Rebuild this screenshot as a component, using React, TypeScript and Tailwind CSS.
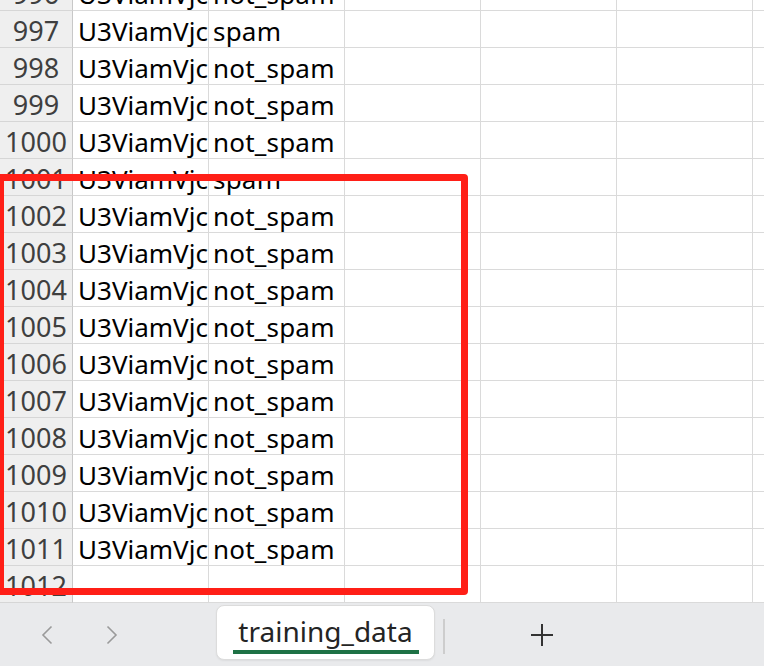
import React from "react";

const rows: { n: number; a: string; b: string }[] = [
  { n: 996, a: "U3ViamVjc", b: "not_spam" },
  { n: 997, a: "U3ViamVjc", b: "spam" },
  { n: 998, a: "U3ViamVjc", b: "not_spam" },
  { n: 999, a: "U3ViamVjc", b: "not_spam" },
  { n: 1000, a: "U3ViamVjc", b: "not_spam" },
  { n: 1001, a: "U3ViamVjc", b: "spam" },
  { n: 1002, a: "U3ViamVjc", b: "not_spam" },
  { n: 1003, a: "U3ViamVjc", b: "not_spam" },
  { n: 1004, a: "U3ViamVjc", b: "not_spam" },
  { n: 1005, a: "U3ViamVjc", b: "not_spam" },
  { n: 1006, a: "U3ViamVjc", b: "not_spam" },
  { n: 1007, a: "U3ViamVjc", b: "not_spam" },
  { n: 1008, a: "U3ViamVjc", b: "not_spam" },
  { n: 1009, a: "U3ViamVjc", b: "not_spam" },
  { n: 1010, a: "U3ViamVjc", b: "not_spam" },
  { n: 1011, a: "U3ViamVjc", b: "not_spam" },
  { n: 1012, a: "", b: "" },
];

export default function App() {
  return (
    <div
      className="relative w-[764px] h-[666px] overflow-hidden bg-white flex flex-col"
      style={{ fontFamily: '"Noto Sans", "Open Sans", sans-serif' }}
    >
      <div className="flex-1 overflow-hidden">
        <div className="mt-[-26px] flex flex-col">
          {rows.map((r) => (
            <div key={r.n} className="flex h-[37px] shrink-0">
              <div className="w-[73px] shrink-0 h-full box-border pt-[3px] border-b border-r border-b-[#d6d6d6] border-r-[#c8c8c8] bg-[#efefef] flex items-center justify-center text-[27px] leading-none text-[#3f3f3f] overflow-hidden">
                {r.n}
              </div>
              <div className="w-[136px] shrink-0 h-full box-border pt-[3px] border-b border-r border-[#dadada] flex items-center pl-[5px] text-[26px] leading-none text-black overflow-hidden whitespace-nowrap">
                {r.a}
              </div>
              <div className="w-[136px] shrink-0 h-full box-border pt-[3px] border-b border-r border-[#dadada] flex items-center pl-[4px] text-[26px] tracking-[0.2px] leading-none text-black overflow-hidden whitespace-nowrap">
                {r.b}
              </div>
              <div className="w-[136px] shrink-0 h-full box-border border-b border-r border-[#dadada]" />
              <div className="w-[136px] shrink-0 h-full box-border border-b border-r border-[#dadada]" />
              <div className="w-[136px] shrink-0 h-full box-border border-b border-r border-[#dadada]" />
              <div className="flex-1 h-full box-border border-b border-[#dadada]" />
            </div>
          ))}
        </div>
      </div>

      <div className="h-[63px] shrink-0 bg-[#e9eaec] flex items-start">
        <div className="w-[216px] h-full flex items-center">
          <svg width="12" height="20" viewBox="0 0 12 20" className="ml-[41px]">
            <path d="M10.5 1.5 L2 10 L10.5 18.5" fill="none" stroke="#9a9a9a" strokeWidth="1.6" />
          </svg>
          <svg width="12" height="20" viewBox="0 0 12 20" className="ml-[53px]">
            <path d="M1.5 1.5 L10 10 L1.5 18.5" fill="none" stroke="#9a9a9a" strokeWidth="1.6" />
          </svg>
        </div>
        <div className="mt-[2px] w-[219px] h-[55px] bg-white rounded-[8px] border border-[#dcdcdc] shadow-[0_1px_2px_rgba(0,0,0,0.06)] flex flex-col items-center">
          <div className="mt-[8px] text-[28px] leading-[34px] text-[#242424]">training_data</div>
          <div className="mt-[2px] w-[186px] h-[4px] bg-[#1e7145]" />
        </div>
        <div className="ml-[8px] mt-[16px] w-[2px] h-[35px] bg-[#cdcdcd]" />
        <div className="ml-[85px] h-full flex items-center">
          <svg width="24" height="24" viewBox="0 0 24 24">
            <path d="M12 1 V23 M1 12 H23" fill="none" stroke="#333" strokeWidth="2" />
          </svg>
        </div>
      </div>

      <div className="absolute left-[-3px] top-[174px] w-[471px] h-[421px] border-[7px] border-[#ff1f17] rounded-[4px] pointer-events-none" />
    </div>
  );
}
